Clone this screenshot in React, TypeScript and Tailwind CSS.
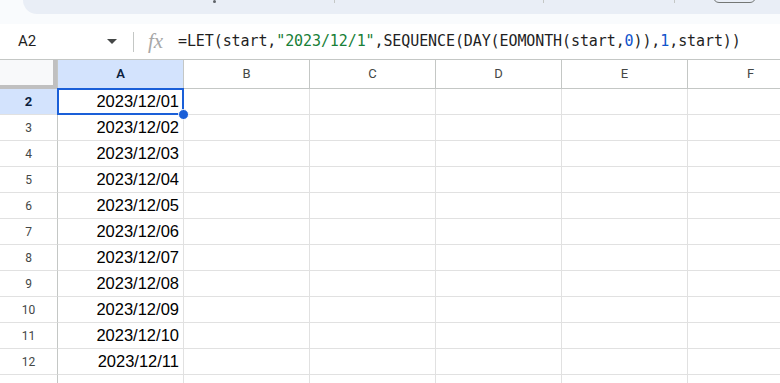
const cols = ['A', 'B', 'C', 'D', 'E', 'F']

const rows = Array.from({ length: 11 }, (_, i) => ({
  num: i + 2,
  value: `2023/12/${String(i + 1).padStart(2, '0')}`,
}))

function FormulaBar() {
  return (
    <div className="h-[35px] bg-white flex items-center" style={{ fontFamily: 'Roboto, sans-serif' }}>
      <div className="w-[133px] h-full flex items-center pl-[18px] pr-[16px] justify-between">
        <span className="text-[15px] text-[#1f1f1f]">A2</span>
        <svg width="10" height="5" viewBox="0 0 10 5">
          <path d="M0 0 L10 0 L5 5 Z" fill="#444746" />
        </svg>
      </div>
      <div className="w-px h-[20px] bg-[#c4c7c5]" />
      <span
        className="ml-[14px] w-[20px] text-[21px] italic text-[#a8a8a8] leading-none"
        style={{ fontFamily: '"Liberation Serif", serif' }}
      >
        fx
      </span>
      <span
        className="ml-[10px] text-[15px] text-[#1f1f1f] whitespace-nowrap"
        style={{ fontFamily: '"DejaVu Sans Mono", "Liberation Mono", monospace', letterSpacing: '-0.1px' }}
      >
        =LET(start,<span className="text-[#188038]">"2023/12/1"</span>,SEQUENCE(DAY(EOMONTH(start,
        <span className="text-[#1155cc]">0</span>)),<span className="text-[#1155cc]">1</span>,start))
      </span>
    </div>
  )
}

function Row({ num, value, selected }: { num: number; value: string; selected: boolean }) {
  return (
    <>
      <div
        className={`h-[26px] border-r border-r-[#c4c7c5] border-b border-b-[#e1e1e1] flex items-center justify-center ${
          selected ? 'bg-[#d3e3fd] text-[#0b1f3f] font-bold text-[13px]' : 'bg-white text-[#444746] text-[12px]'
        }`}
      >
        {num}
      </div>
      <div
        className="h-[26px] border-r border-b border-[#e1e1e1] flex items-center justify-end pr-[4px] text-[16.5px] text-black relative"
        style={{ fontFamily: '"Liberation Sans", Arial, sans-serif' }}
      >
        {value}
        {selected && (
          <>
            <div className="absolute -left-px -top-px -right-px -bottom-px border-2 border-[#1a5fd8]" />
            <div className="absolute -right-[6px] -bottom-[6px] w-[11px] h-[11px] rounded-full bg-[#1a5fd8] border border-white z-10" />
          </>
        )}
      </div>
      {['B', 'C', 'D', 'E', 'F'].map((c) => (
        <div key={c} className="h-[26px] border-r border-b border-[#e1e1e1]" />
      ))}
    </>
  )
}

export default function App() {
  return (
    <div className="w-[780px] h-[383px] overflow-hidden bg-white relative">
      {/* toolbar remnant */}
      <div className="h-[24px] bg-[#f9fbfd] relative">
        <div className="ml-[23px] h-[14px] bg-[#e9eef6] rounded-bl-[22px] relative">
          <div className="absolute left-[190px] top-0 w-[3px] h-[3px] bg-[#5f6368] rounded-full" />
          <div className="absolute left-[311px] top-0 w-px h-[3px] bg-[#c4c7c5]" />
          <div className="absolute left-[520px] top-0 w-px h-[3px] bg-[#c4c7c5]" />
          <div className="absolute left-[651px] top-0 w-px h-[3px] bg-[#c4c7c5]" />
          <div className="absolute left-[690px] -top-[10px] w-[43px] h-[13px] border border-[#747775] rounded-[6px]" />
        </div>
      </div>
      <FormulaBar />

      <div
        className="grid grid-cols-[58px_126px_126px_126px_126px_126px_126px] border-t border-[#c4c7c5]"
        style={{ fontFamily: 'Roboto, Arial, sans-serif' }}
      >
        {/* header row */}
        <div className="h-[29px] border-r border-b border-[#c4c7c5] bg-white">
          <div className="w-[53px] h-[25px] bg-[#f8f9fa] border-r-[4px] border-b-[4px] border-[#c0c0c0] box-content" />
        </div>
        {cols.map((c) => (
          <div
            key={c}
            className={`h-[29px] border-r border-b border-[#c4c7c5] flex items-center justify-center text-[13px] ${
              c === 'A' ? 'bg-[#d3e3fd] text-[#0b1f3f] font-semibold' : 'bg-white text-[#444746]'
            }`}
          >
            {c}
          </div>
        ))}

        {rows.map((r) => (
          <Row key={r.num} num={r.num} value={r.value} selected={r.num === 2} />
        ))}
        {/* partial row 13 */}
        <div className="h-[26px] border-r border-[#c4c7c5] flex items-center justify-center text-[12px] text-[#444746]">
          13
        </div>
        {cols.map((c) => (
          <div key={c} className="h-[26px] border-r border-[#e1e1e1]" />
        ))}
      </div>
    </div>
  )
}
